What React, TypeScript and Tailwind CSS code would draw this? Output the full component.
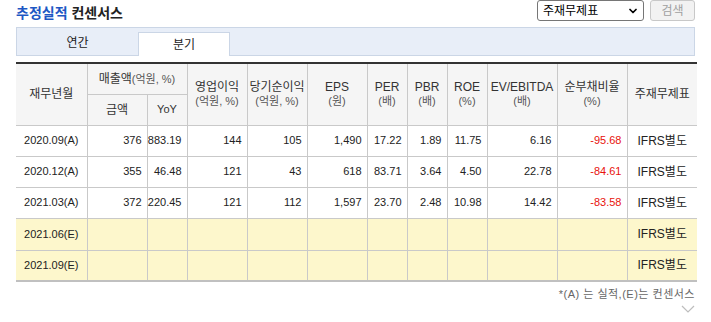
import { ChevronDown } from 'lucide-react';

const rows = [
  { d: '2020.09(A)', v: ['376', '883.19', '144', '105', '1,490', '17.22', '1.89', '11.75', '6.16', '-95.68'], est: false },
  { d: '2020.12(A)', v: ['355', '46.48', '121', '43', '618', '83.71', '3.64', '4.50', '22.78', '-84.61'], est: false },
  { d: '2021.03(A)', v: ['372', '220.45', '121', '112', '1,597', '23.70', '2.48', '10.98', '14.42', '-83.58'], est: false },
  { d: '2021.06(E)', v: ['', '', '', '', '', '', '', '', '', ''], est: true },
  { d: '2021.09(E)', v: ['', '', '', '', '', '', '', '', '', ''], est: true },
];

const widths = [71, 60, 40, 60, 60, 60, 40, 40, 40, 70, 70, 70];

function HeadCell({ top, sub, className = '' }: { top: string; sub: string; className?: string }) {
  return (
    <th rowSpan={2} className={`border-l border-[#c9c9c9] font-normal align-middle leading-[14px] ${className}`}>
      <div className="text-[12px] text-[#333]">{top}</div>
      <div className="text-[11px] text-[#555]">{sub}</div>
    </th>
  );
}

export default function App() {
  return (
    <div
      className="w-[711px] h-[322px] bg-white relative overflow-hidden"
      style={{ fontFamily: '"Liberation Sans", "Noto Sans CJK KR", sans-serif' }}
    >
      <div className="flex items-center justify-between pl-4 pr-4 h-[21px]">
        <h2 className="text-[14px] font-bold mt-[4px] leading-none">
          <span className="text-[#1d57c4]">추정실적</span> <span className="text-[#222]">컨센서스</span>
        </h2>
        <div className="flex items-center gap-[6px] self-start">
          <div className="w-[107px] h-[21px] border border-[#767676] rounded-[3px] flex items-center justify-between pl-[5px] pr-[4px] text-[12px] text-black">
            <span>주재무제표</span>
            <ChevronDown size={12} strokeWidth={3.5} />
          </div>
          <div className="w-[45px] h-[21px] border border-[#c8c8c8] rounded-[3px] bg-[#f2f2f2] flex items-center justify-center text-[12px] text-[#a0a0a0]">
            검색
          </div>
        </div>
      </div>

      <div className="mx-4 mt-[6px] h-[29px] bg-[#e8eef8] border border-[#cbd6e6] flex items-end text-[12px] text-[#222]">
        <div className="w-[121px] h-[24px] flex items-center justify-center">연간</div>
        <div className="w-[92px] h-[24px] bg-white border-l border-r border-t border-[#cbd6e6] flex items-center justify-center -mb-px">
          분기
        </div>
      </div>

      <table className="ml-4 mt-[6px] border-collapse table-fixed w-[681px] border-t-2 border-t-[#333] border-b-2 border-b-[#c0c0c0]">
        <colgroup>
          {widths.map((w, i) => (
            <col key={i} style={{ width: w }} />
          ))}
        </colgroup>
        <thead className="bg-[#f5f5f5]">
          <tr className="h-[31px]">
            <th rowSpan={2} className="font-normal text-[12px] text-[#333] align-middle">재무년월</th>
            <th colSpan={2} className="border-l border-b border-[#c9c9c9] font-normal text-[12px] text-[#333]">
              매출액<span className="text-[11px] text-[#555]">(억원, %)</span>
            </th>
            <HeadCell top="영업이익" sub="(억원, %)" />
            <HeadCell top="당기순이익" sub="(억원, %)" />
            <HeadCell top="EPS" sub="(원)" />
            <HeadCell top="PER" sub="(배)" />
            <HeadCell top="PBR" sub="(배)" />
            <HeadCell top="ROE" sub="(%)" />
            <HeadCell top="EV/EBITDA" sub="(배)" />
            <HeadCell top="순부채비율" sub="(%)" />
            <th rowSpan={2} className="border-l border-[#c9c9c9] font-normal text-[12px] text-[#333]">주재무제표</th>
          </tr>
          <tr className="h-[31px]">
            <th className="border-l border-[#c9c9c9] font-normal text-[12px] text-[#333]">금액</th>
            <th className="border-l border-[#c9c9c9] font-normal text-[11px] text-[#333]">YoY</th>
          </tr>
        </thead>
        <tbody>
          {rows.map((r, ri) => (
            <tr
              key={r.d}
              className={`${ri === 3 ? 'h-[32px]' : 'h-[31px]'} border-t border-[#c9c9c9] ${r.est ? 'bg-[#fdf7cc]' : 'bg-white'}`}
            >
              <td className="text-center text-[11px] text-[#222]">{r.d}</td>
              {r.v.map((v, i) => (
                <td
                  key={i}
                  className={`border-l border-[#c9c9c9] text-right pr-[5px] text-[11px] ${i === 9 ? 'text-[#e8120c]' : 'text-[#222]'}`}
                >
                  {v}
                </td>
              ))}
              <td className="border-l border-[#c9c9c9] text-center text-[12px] text-[#222]">IFRS별도</td>
            </tr>
          ))}
        </tbody>
      </table>

      <div className="mr-4 mt-[4px] text-right text-[11px] tracking-[0.5px] text-[#666]">*(A) 는 실적,(E)는 컨센서스</div>
      <div className="flex justify-end mr-4 mt-[2px]">
        <svg width="14" height="8" viewBox="0 0 14 8">
          <path d="M1 1 L7 7 L13 1" fill="none" stroke="#bdbdbd" strokeWidth="1.2" />
        </svg>
      </div>
    </div>
  );
}
